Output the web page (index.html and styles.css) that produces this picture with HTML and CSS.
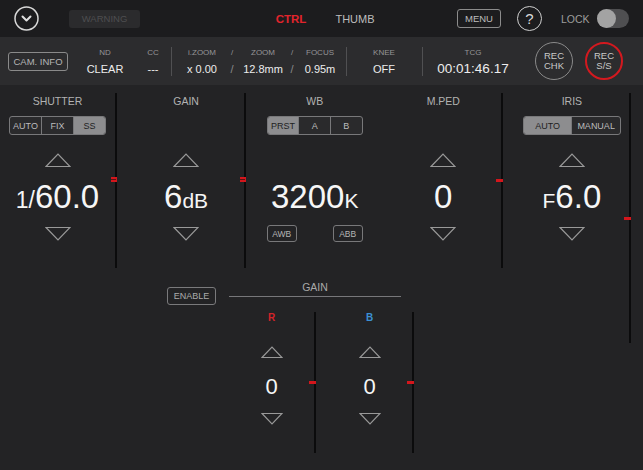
FILE: index.html
```html
<!DOCTYPE html>
<html>
<head>
<meta charset="utf-8">
<link rel="stylesheet" href="styles.css">
</head>
<body>
<div class="topbar">
  <div class="chev-btn">
    <svg width="25" height="25" viewBox="0 0 25 25"><circle cx="12.5" cy="12.5" r="11.5" fill="none" stroke="#d8d8d8" stroke-width="1.5"/><polyline points="8.5,10.5 12.5,14.5 16.5,10.5" fill="none" stroke="#e0e0e0" stroke-width="2" stroke-linecap="round" stroke-linejoin="round"/></svg>
  </div>
  <div class="warning">WARNING</div>
  <div class="tab tab-ctrl">CTRL</div>
  <div class="tab tab-thumb">THUMB</div>
  <div class="menu">MENU</div>
  <div class="help">?</div>
  <div class="lock">LOCK</div>
  <div class="toggle"><span class="knob"></span></div>
</div>

<div class="infobar">
  <div class="cam-info">CAM. INFO</div>
  <div class="cell c-nd"><span class="lbl">ND</span><span class="val">CLEAR</span></div>
  <div class="cell c-cc"><span class="lbl">CC</span><span class="val">---</span></div>
  <div class="sep s1"></div>
  <div class="cell c-izoom"><span class="lbl">i.ZOOM</span><span class="val">x 0.00</span></div>
  <div class="cell c-slash"><span class="lbl">/</span><span class="val slash">/</span></div>
  <div class="cell c-zoom"><span class="lbl">ZOOM</span><span class="val">12.8mm</span></div>
  <div class="cell c-slash2"><span class="lbl">/</span><span class="val slash">/</span></div>
  <div class="cell c-focus"><span class="lbl">FOCUS</span><span class="val">0.95m</span></div>
  <div class="sep s2"></div>
  <div class="cell c-knee"><span class="lbl">KNEE</span><span class="val">OFF</span></div>
  <div class="sep s3"></div>
  <div class="cell c-tcg"><span class="lbl">TCG</span><span class="val tcg">00:01:46.17</span></div>
  <div class="rec rec-chk">REC<br>CHK</div>
  <div class="rec rec-ss">REC<br>S/S</div>
</div>

<div class="main">
  <div class="col">
    <div class="ctrl">
      <div class="label">SHUTTER</div>
      <div class="seg seg3"><span>AUTO</span><span>FIX</span><span class="on">SS</span></div>
      <svg class="tri up" width="26" height="14" viewBox="0 0 26 14"><polygon points="1,13.5 13,1 25,13.5" fill="none" stroke="#999" stroke-width="1.2"/></svg>
      <div class="value"><span class="pre">1/</span>60.0</div>
      <svg class="tri down" width="26" height="14" viewBox="0 0 26 14"><polygon points="1,0.5 13,13 25,0.5" fill="none" stroke="#999" stroke-width="1.2"/></svg>
    </div>
    <div class="track"><div class="line"><span class="mark br" style="top:84px"></span></div></div>
  </div>

  <div class="col">
    <div class="ctrl">
      <div class="label">GAIN</div>
      <div class="seg-spacer"></div>
      <svg class="tri up" width="26" height="14" viewBox="0 0 26 14"><polygon points="1,13.5 13,1 25,13.5" fill="none" stroke="#999" stroke-width="1.2"/></svg>
      <div class="value">6<span class="suf">dB</span></div>
      <svg class="tri down" width="26" height="14" viewBox="0 0 26 14"><polygon points="1,0.5 13,13 25,0.5" fill="none" stroke="#999" stroke-width="1.2"/></svg>
    </div>
    <div class="track"><div class="line"><span class="mark br" style="top:84px"></span></div></div>
  </div>

  <div class="col">
    <div class="ctrl">
      <div class="label">WB</div>
      <div class="seg seg3 seg-wb"><span class="on">PRST</span><span>A</span><span>B</span></div>
      <div class="tri-spacer"></div>
      <div class="value">3200<span class="suf">K</span></div>
      <div class="wb-btns"><span class="small-btn">AWB</span><span class="small-btn">ABB</span></div>
    </div>
  </div>

  <div class="col">
    <div class="ctrl">
      <div class="label">M.PED</div>
      <div class="seg-spacer"></div>
      <svg class="tri up" width="26" height="14" viewBox="0 0 26 14"><polygon points="1,13.5 13,1 25,13.5" fill="none" stroke="#999" stroke-width="1.2"/></svg>
      <div class="value">0</div>
      <svg class="tri down" width="26" height="14" viewBox="0 0 26 14"><polygon points="1,0.5 13,13 25,0.5" fill="none" stroke="#999" stroke-width="1.2"/></svg>
    </div>
    <div class="track"><div class="line"><span class="mark" style="top:86px"></span></div></div>
  </div>

  <div class="col">
    <div class="ctrl">
      <div class="label">IRIS</div>
      <div class="seg seg2"><span class="on">AUTO</span><span>MANUAL</span></div>
      <svg class="tri up" width="26" height="14" viewBox="0 0 26 14"><polygon points="1,13.5 13,1 25,13.5" fill="none" stroke="#999" stroke-width="1.2"/></svg>
      <div class="value"><span class="pre-f">F</span>6.0</div>
      <svg class="tri down" width="26" height="14" viewBox="0 0 26 14"><polygon points="1,0.5 13,13 25,0.5" fill="none" stroke="#999" stroke-width="1.2"/></svg>
    </div>
    <div class="track"><div class="line long"><span class="mark" style="top:124px"></span></div></div>
  </div>
</div>

<div class="bottom">
  <div class="enable">ENABLE</div>
  <div class="rb">
    <div class="rb-head">GAIN</div>
    <div class="rb-rule"></div>
    <div class="rb-cols">
      <div class="sub">
        <div class="sub-ctrl">
          <div class="sub-label red">R</div>
          <svg class="tri-sm up" width="22" height="12" viewBox="0 0 22 12"><polygon points="1,11.5 11,1 21,11.5" fill="none" stroke="#999" stroke-width="1.1"/></svg>
          <div class="sub-val">0</div>
          <svg class="tri-sm down" width="22" height="12" viewBox="0 0 22 12"><polygon points="1,0.5 11,11 21,0.5" fill="none" stroke="#999" stroke-width="1.1"/></svg>
        </div>
        <div class="sub-track"><div class="line sub-line"><span class="mark" style="top:69px"></span></div></div>
      </div>
      <div class="sub">
        <div class="sub-ctrl">
          <div class="sub-label blue">B</div>
          <svg class="tri-sm up" width="22" height="12" viewBox="0 0 22 12"><polygon points="1,11.5 11,1 21,11.5" fill="none" stroke="#999" stroke-width="1.1"/></svg>
          <div class="sub-val">0</div>
          <svg class="tri-sm down" width="22" height="12" viewBox="0 0 22 12"><polygon points="1,0.5 11,11 21,0.5" fill="none" stroke="#999" stroke-width="1.1"/></svg>
        </div>
        <div class="sub-track"><div class="line sub-line"><span class="mark" style="top:69px"></span></div></div>
      </div>
    </div>
  </div>
</div>
</body>
</html>
```

FILE: styles.css
```css
* { box-sizing: border-box; }
html, body { margin: 0; padding: 0; }
body {
  width: 643px;
  height: 470px;
  overflow: hidden;
  background: #232325;
  font-family: "Liberation Sans", Arial, sans-serif;
  color: #f2f2f2;
}

/* top bar */
.topbar {
  height: 37px;
  background: #1c1c1e;
  display: flex;
  align-items: center;
}
.chev-btn { margin-left: 14px; width: 25px; height: 25px; display: flex; }
.warning {
  margin-left: 30px;
  width: 71px;
  height: 18px;
  background: #2b2b2d;
  border-radius: 3px;
  color: #4e4e50;
  font-size: 9.5px;
  display: flex;
  align-items: center;
  justify-content: center;
}
.tab { font-size: 11px; text-align: center; white-space: nowrap; }
.tab-ctrl { margin-left: 135px; width: 32px; color: #e2242c; font-weight: bold; font-size: 11.5px; }
.tab-thumb { margin-left: 27px; width: 42px; color: #bdbdbd; }
.menu {
  margin-left: 81px;
  width: 44px;
  height: 19px;
  border: 1px solid #8c8c8c;
  border-radius: 3px;
  color: #bdbdbd;
  font-size: 9.5px;
  display: flex;
  align-items: center;
  justify-content: center;
}
.help {
  margin-left: 16px;
  width: 25px;
  height: 25px;
  border: 1.3px solid #cfcfcf;
  border-radius: 50%;
  color: #d8d8d8;
  font-size: 15px;
  display: flex;
  align-items: center;
  justify-content: center;
}
.lock { margin-left: 19px; width: 30px; font-size: 10.5px; color: #9c9c9c; }
.toggle {
  margin-left: 6px;
  width: 32px;
  height: 19px;
  border-radius: 10px;
  background: #4f4f51;
  display: flex;
  align-items: center;
}
.knob { width: 19px; height: 19px; border-radius: 50%; background: #a3a3a3; }

/* info bar */
.infobar {
  height: 48px;
  background: #2c2c2e;
  display: flex;
  align-items: center;
}
.cam-info {
  margin-left: 8px;
  width: 60px;
  height: 19px;
  border: 1px solid #8a8a8a;
  border-radius: 3px;
  color: #b5b5b5;
  font-size: 9.5px;
  display: flex;
  align-items: center;
  justify-content: center;
}
.cell { display: flex; flex-direction: column; align-items: center; padding-top: 2px; }
.lbl { font-size: 8px; line-height: 10px; color: #959597; }
.val { font-size: 11px; line-height: 14px; color: #ededed; margin-top: 4px; white-space: nowrap; }
.val.slash { color: #8a8a8a; }
.val.tcg { font-size: 13.5px; }
.c-nd { margin-left: 17px; width: 40px; }
.c-cc { margin-left: 11px; width: 34px; }
.sep { width: 1px; height: 29px; background: #505052; }
.s1 { margin-left: 1px; }
.c-izoom { margin-left: 10px; width: 40px; }
.c-slash { width: 20px; }
.c-zoom { margin-left: 1px; width: 40px; }
.c-slash2 { width: 18px; }
.c-focus { width: 38px; }
.s2 { margin-left: 7px; }
.c-knee { margin-left: 17px; width: 40px; }
.s3 { margin-left: 18px; }
.c-tcg { margin-left: 10px; width: 80px; }
.rec {
  width: 38px;
  height: 38px;
  border-radius: 50%;
  border: 1px solid #8a8a8a;
  color: #c9c9c9;
  font-size: 9.5px;
  line-height: 10px;
  text-align: center;
  display: flex;
  align-items: center;
  justify-content: center;
}
.rec-chk { margin-left: 22px; }
.rec-ss { margin-left: 12px; border: 2.5px solid #d3191f; }

/* main controls */
.main {
  display: grid;
  grid-template-columns: repeat(5, 1fr);
  height: 190px;
}
.col { display: flex; }
.ctrl {
  width: 115px;
  display: flex;
  flex-direction: column;
  align-items: center;
  padding-top: 9px;
}
.label { font-size: 10.5px; line-height: 14px; color: #b2b2b2; }
.seg {
  margin-top: 8px;
  height: 19px;
  display: flex;
  border: 1px solid #78787a;
  border-radius: 3px;
  overflow: hidden;
  background: #2a2a2c;
}
.seg span {
  flex: 1;
  display: flex;
  align-items: center;
  justify-content: center;
  font-size: 9px;
  color: #bcbcbc;
  border-left: 1px solid #78787a;
}
.seg span:first-child { border-left: none; }
.seg span.on { background: #8d8d8f; color: #1e1e1e; }
.seg3 { width: 97px; }
.seg-wb { width: 96px; }
.seg2 { width: 98px; }
.seg-spacer { margin-top: 8px; height: 19px; }
.tri { display: block; }
.tri.up { margin-top: 18px; }
.tri.down { margin-top: 12px; }
.tri-spacer { margin-top: 18px; height: 14px; }
.value {
  margin-top: 12px;
  height: 36px;
  line-height: 36px;
  font-size: 33px;
  color: #f6f6f6;
  white-space: nowrap;
}
.pre { font-size: 23px; }
.suf { font-size: 21px; }
.pre-f { font-size: 21px; }
.wb-btns {
  margin-top: 10px;
  width: 96px;
  display: flex;
  justify-content: space-between;
}
.small-btn {
  width: 30px;
  height: 17px;
  border: 1px solid #78787a;
  border-radius: 3px;
  font-size: 8.5px;
  color: #b5b5b5;
  display: flex;
  align-items: center;
  justify-content: center;
}
.track { width: 2px; padding-top: 8px; }
.line { position: relative; width: 2px; height: 175px; background: #0b0b0c; }
.line.long { height: 250px; }
.mark {
  position: absolute;
  left: -5px;
  width: 7px;
  height: 3px;
  background: #d4161c;
}
.mark.br {
  left: -4px;
  width: 6px;
  height: 5px;
  background: #5a1214;
  border: 2px solid #d4161c;
  border-left: none;
  border-right-width: 1px;
}

/* bottom R/B gain */
.bottom {
  display: flex;
  align-items: flex-start;
  padding-left: 167px;
  padding-top: 6px;
}
.enable {
  margin-top: 6px;
  width: 49px;
  height: 18px;
  border: 1px solid #7a7a7c;
  border-radius: 3px;
  font-size: 9px;
  color: #ababab;
  display: flex;
  align-items: center;
  justify-content: center;
}
.rb { margin-left: 13px; }
.rb-head { width: 172px; text-align: center; font-size: 10.5px; line-height: 12px; color: #a9a9a9; }
.rb-rule { width: 172px; height: 1px; margin-top: 3px; background: #77777a; }
.rb-cols { display: flex; }
.sub { display: flex; width: 98px; }
.sub-ctrl {
  width: 85px;
  display: flex;
  flex-direction: column;
  align-items: center;
  padding-top: 15px;
}
.sub-label { font-size: 10px; line-height: 12px; font-weight: bold; }
.sub-label.red { color: #d3242a; }
.sub-label.blue { color: #3b90d3; }
.tri-sm { display: block; }
.tri-sm.up { margin-top: 22px; }
.tri-sm.down { margin-top: 12px; }
.sub-val { margin-top: 15px; height: 28px; line-height: 28px; font-size: 22px; color: #f6f6f6; }
.sub-track { width: 2px; padding-top: 15px; }
.line.sub-line { height: 141px; }
```
